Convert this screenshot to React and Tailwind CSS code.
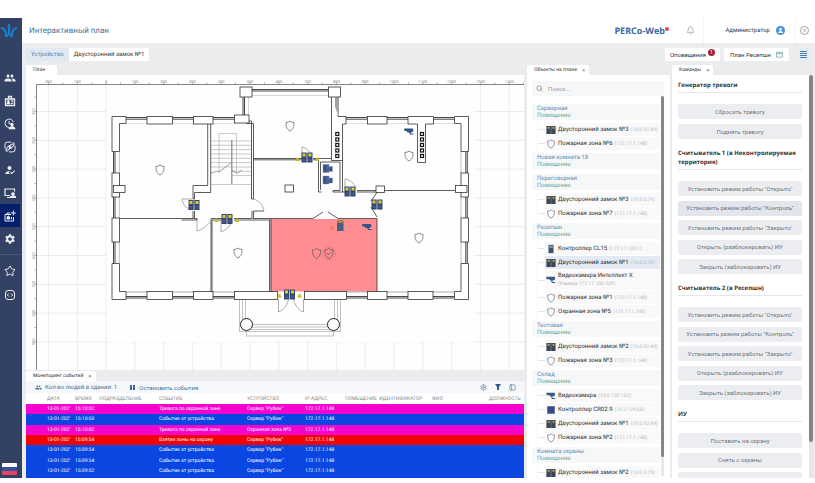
import React, { useState } from "react";
import { MdPeople, MdSettings, MdHowToReg } from "react-icons/md";
import { LuBell, LuSearch, LuStar, LuSettings, LuPanelLeft } from "react-icons/lu";

const groups = [
  {
    name: "Серверная",
    items: [
      { icon: "lock", name: "Двусторонний замок №3", ip: "(10.0.92.49)" },
      { icon: "shield", name: "Пожарная зона №6", ip: "(172.17.1.148)" },
    ],
  },
  { name: "Новая комната 18", items: [] },
  {
    name: "Переговорная",
    items: [
      { icon: "lock", name: "Двусторонний замок №3", ip: "(10.0.0.29)" },
      { icon: "shield", name: "Пожарная зона №7", ip: "(172.17.1.148)" },
    ],
  },
  {
    name: "Ресепшн",
    items: [
      { icon: "reader", name: "Контроллер CL15", ip: "(172.17.100.1)" },
      { icon: "lock", name: "Двусторонний замок №1", ip: "(10.0.0.29)", selected: true },
      { icon: "camera", name: "Видеокамера Интеллект X", ip: "(Камера 172.17.100.539)", tall: true },
      { icon: "shield", name: "Пожарная зона №1", ip: "(172.17.1.148)" },
      { icon: "shield", name: "Охранная зона №5", ip: "(172.17.1.148)" },
    ],
  },
  {
    name: "Тестовая",
    items: [
      { icon: "lock", name: "Двусторонний замок №2", ip: "(10.0.92.49)" },
      { icon: "shield", name: "Пожарная зона №3", ip: "(172.17.1.148)" },
    ],
  },
  {
    name: "Склад",
    items: [
      { icon: "camera", name: "Видеокамера", ip: "(10.0.100.132)" },
      { icon: "chip", name: "Контроллер CR02.9", ip: "(10.2.129.66)" },
      { icon: "lock", name: "Двусторонний замок №1", ip: "(10.0.92.49)" },
      { icon: "shield", name: "Пожарная зона №2", ip: "(172.17.1.148)" },
    ],
  },
  {
    name: "Комната охраны",
    items: [{ icon: "lock", name: "Двусторонний замок №2", ip: "(10.0.9.29)" }],
  },
];

const readerCommands = [
  'Установить режим работы "Открыто"',
  'Установить режим работы "Контроль"',
  'Установить режим работы "Закрыто"',
  "Открыть (разблокировать) ИУ",
  "Закрыть (заблокировать) ИУ",
];

const commands = [
  { title: "Генератор тревоги", height: "h-[35px]", buttons: ["Сбросить тревогу", "Поднять тревогу"] },
  { title: "Считыватель 1 (в Неконтролируемая территория)", height: "h-[93px]", buttons: readerCommands, active: 1 },
  { title: "Считыватель 2 (в Ресепшн)", height: "h-[93px]", buttons: readerCommands },
  { title: "ИУ", height: "h-[54px]", buttons: ["Поставить на охрану", "Снять с охраны", "Снять тревогу"] },
];

const columns = [
  ["", "w-[21px]"],
  ["ДАТА", "w-[28px]"],
  ["ВРЕМЯ", "w-[24px]"],
  ["ПОДРАЗДЕЛЕНИЕ", "w-[60px]"],
  ["СОБЫТИЕ", "w-[88px]"],
  ["УСТРОЙСТВО", "w-[58px]"],
  ["IP-АДРЕС", "w-[40px]"],
  ["ПОМЕЩЕНИЕ", "w-[34px]"],
  ["ИДЕНТИФИКАТОР", "w-[53px]"],
  ["ФИО", "w-[57px]"],
  ["ДОЛЖНОСТЬ", "w-[35px]"],
];

const events = [
  { time: "15:10:02", text: "Тревога по охранной зоне", device: 'Сервер "Рубеж"', color: "bg-[#f403cf]" },
  { time: "15:10:03", text: "Событие от устройства", device: 'Сервер "Рубеж"', color: "bg-[#0a47e2]" },
  { time: "15:10:02", text: "Тревога по охранной зоне", device: "Охранная зона №5", color: "bg-[#f403cf]" },
  { time: "15:09:54", text: "Взятие зоны на охрану", device: 'Сервер "Рубеж"', color: "bg-[#f00505]" },
  { time: "15:09:54", text: "Событие от устройства", device: 'Сервер "Рубеж"', color: "bg-[#0a47e2]" },
  { time: "15:09:54", text: "Событие от устройства", device: 'Сервер "Рубеж"', color: "bg-[#0a47e2]" },
  { time: "15:09:52", text: "Событие от устройства", device: 'Сервер "Рубеж"', color: "bg-[#0a47e2]" },
];

const shieldPath = "M0 -5 C1.5 -3.8 2.5 -3.6 4 -3.6 C4.2 0.5 3.4 3 0 5 C-3.4 3 -4.2 0.5 -4 -3.6 C-2.5 -3.6 -1.5 -3.8 0 -5Z";

const BadgeIcon = () => (
  <svg viewBox="0 0 12 12" className="size-3" fill="none" stroke="currentColor" strokeWidth="1.3">
    <path d="M1.5 4h9v6.5h-9zM4.5 4V1.5h3V4" />
    <path d="M3 8.7c0-1.4 2.8-1.4 2.8 0zM7.2 6h2M7.2 8.3h2" />
    <circle cx="4.4" cy="6.3" r=".6" fill="currentColor" />
  </svg>
);

const ClockUserIcon = () => (
  <svg viewBox="0 0 12 12" className="size-3" fill="none" stroke="currentColor" strokeWidth="1">
    <path d="M5 9.5A4.2 4.2 0 1 1 9.2 4.2M5 3v2.7h1.6" />
    <circle cx="8" cy="6.6" r="1.3" fill="currentColor" />
    <path d="M5 10.8c0-2.6 6-2.6 6 0z" fill="currentColor" />
  </svg>
);

const LinkIcon = () => (
  <svg viewBox="0 0 12 12" className="size-3" fill="none" stroke="currentColor" strokeWidth="1">
    <path d="M7 1.1H3.2A2.2 2.2 0 0 0 1 3.3v4.2M5 10.9h3.8A2.2 2.2 0 0 0 11 8.7V4.5M8.5 1.5a2.2 2.2 0 0 1 2 2M1.5 8.5a2.2 2.2 0 0 0 2 2" />
    <rect x="2.2" y="5.5" width="5" height="2.6" rx="1.3" transform="rotate(-45 4.7 6.8)" />
    <rect x="4.8" y="3.9" width="5" height="2.6" rx="1.3" transform="rotate(-45 7.3 5.2)" />
  </svg>
);

const ScreenUserIcon = () => (
  <svg viewBox="0 0 12 12" className="size-3" fill="none" stroke="currentColor" strokeWidth="1.2">
    <path d="M6 8.5H1V2h9.5v2.5M3 10.5h3" />
    <circle cx="9" cy="7" r="1.2" fill="currentColor" />
    <path d="M6.5 10.5c0-2 5-2 5 0z" fill="currentColor" />
  </svg>
);

const PlanIcon = () => (
  <svg viewBox="0 0 12 12" className="size-3" fill="none" stroke="currentColor" strokeWidth="1">
    <path d="M7 4.5H1V11h8.5V7M3 4.5V3h3" />
    <path d="M3 9V7l1.3-1 1.3 1v2zM7.5 7v2.3" fill="currentColor" />
    <path d="M9.3 .5v5M6.8 3h5" />
  </svg>
);

const CodeIcon = () => (
  <svg viewBox="0 0 12 12" className="size-3" fill="none" stroke="currentColor" strokeWidth="1">
    <rect x="1.5" y="1.5" width="9" height="9" rx="2.5" />
    <path d="M4.8 4.5L3.3 6l1.5 1.5M7.2 4.5L8.7 6 7.2 7.5" />
  </svg>
);

const menu = [
  { label: "Персонал", icon: <MdPeople className="size-3" /> },
  { label: "Бюро пропусков", icon: <BadgeIcon /> },
  { label: "УРВ", icon: <ClockUserIcon /> },
  { label: "Интеграции", icon: <LinkIcon /> },
  { label: "Верификация", icon: <MdHowToReg className="size-3" /> },
  { label: "Мониторинг", icon: <ScreenUserIcon /> },
  { label: "Интерактивный план", icon: <PlanIcon />, active: true },
  { label: "Администрирование", icon: <MdSettings className="size-3" /> },
];

const Sidebar = () => (
  <nav className="flex w-[22px] shrink-0 flex-col bg-[#334164] text-white/90">
    <svg viewBox="0 0 18 18" className="mt-1 mb-[26px] size-[18px] shrink-0" fill="none" stroke="#1581cf" strokeWidth="2.2">
      <path d="M9 2v11M1 6c4 .5 5 3 5.5 9M17 6c-4 .5-5 3-5.5 9" />
      <path d="M6 15l3-3 3 3" strokeWidth="1.5" />
    </svg>
    {menu.map((item) => (
      <button
        key={item.label}
        aria-label={item.label}
        className={`flex h-[23px] w-5 shrink-0 items-center justify-center ${item.active ? "bg-[#04206b]" : ""}`}
      >
        {item.icon}
      </button>
    ))}
    <div className="my-1 h-px bg-white/10" />
    <button aria-label="Избранное" className="flex h-6 w-5 items-center justify-center">
      <LuStar className="size-3" />
    </button>
    <button aria-label="API" className="flex h-6 w-5 items-center justify-center">
      <CodeIcon />
    </button>
    <button aria-label="Русский" className="mt-auto mb-[3px] ml-[2px] flex h-3 w-[15px] flex-col overflow-hidden rounded-[1px]">
      <span className="h-1 w-full bg-white" />
      <span className="h-1 w-full bg-[#34509c]" />
      <span className="h-1 w-full bg-[#e3455a]" />
    </button>
  </nav>
);

const Header = () => (
  <header className="flex h-[25px] shrink-0 items-center bg-white">
    <h1 className="ml-[7px] text-[8px] text-[#4a7096]">Интерактивный план</h1>
    <div className="ml-auto flex items-start">
      <span className="font-['Open_Sans',sans-serif] text-[9px] leading-3 font-bold text-[#3a689f]">PERCo-Web</span>
      <span className="mt-[2px] size-1 rounded-full bg-[#e04545]" />
    </div>
    <button aria-label="Уведомления" className="mr-2 ml-[17px] text-gray-400">
      <LuBell className="size-[9px]" />
    </button>
    <div className="flex h-full w-[93px] items-center justify-end gap-[6px] border-x border-gray-100 pr-[10px]">
      <span className="text-[6px] text-[#333]">Администратор</span>
      <svg viewBox="0 0 10 10" className="size-[9px]">
        <circle cx="5" cy="5" r="5" fill="#4593dc" />
        <circle cx="5" cy="3.7" r="1.5" fill="#fff" />
        <path d="M2.3 7.8c0-3 5.4-3 5.4 0z" fill="#fff" />
      </svg>
    </div>
    <button aria-label="Помощь" className="mr-[6px] ml-1 flex size-[9px] items-center justify-center rounded-full border border-gray-400 text-[6px] leading-none text-gray-500">
      ?
    </button>
  </header>
);

const Toolbar = () => (
  <div className="flex h-[22px] shrink-0 items-center text-[6px] text-[#333]">
    <a href="#device" className="ml-1 flex h-[13px] items-center bg-[#e0e8f1] px-[5px] text-[#5a83ad]">
      Устройство
    </a>
    <a href="#lock" className="flex h-[13px] items-center rounded-[1px] bg-white px-[5px]">
      Двусторонний замок №1
    </a>
    <button className="ml-auto flex h-[13px] w-[55px] justify-center gap-[2px] rounded-[1px] bg-white">
      <span className="self-center">Оповещения</span>
      <span className="mt-px flex size-[7px] items-center justify-center rounded-full bg-[#a81e35] text-[5px] leading-none text-white">1</span>
    </button>
    <button className="ml-1 flex h-[13px] w-[65px] items-center justify-between rounded-[1px] bg-white px-[6px]">
      План Ресепшн
      <svg viewBox="0 0 8 8" className="size-[7px]" fill="none" stroke="#6a9aa0" strokeWidth=".8">
        <path d="M.5 1.5h7v5.5h-7zM.5 3.2h7M4 1.5v1.7" />
      </svg>
    </button>
    <button aria-label="Меню" className="mr-2 ml-[11px] flex w-[7px] flex-col gap-px">
      <span className="h-px w-full bg-[#3f7fc0]" />
      <span className="h-px w-full bg-[#3f7fc0]" />
      <span className="h-px w-full bg-[#3f7fc0]" />
      <span className="h-px w-full bg-[#3f7fc0]" />
    </button>
  </div>
);

const Tab = ({ children, closable = true }) => (
  <div className={`flex h-[10px] shrink-0 items-center self-start rounded-t-[2px] bg-white pl-[7px] text-[5px] leading-none text-[#333] ${closable ? "pr-1" : "pr-3"}`}>
    {children}
    {closable && (
      <button aria-label="Закрыть" className="ml-[5px] text-[6px] leading-none text-gray-500">
        ×
      </button>
    )}
  </div>
);

const Shield = ({ x, y }) => <path d={shieldPath} transform={`translate(${x} ${y})`} fill="none" stroke="#555" strokeWidth=".7" />;

const Lock = ({ x, y }) => (
  <g transform={`translate(${x} ${y})`}>
    <rect x="-5.5" y="-5" width="5.2" height="10" fill="#34466f" />
    <rect x=".3" y="-5" width="5.2" height="10" fill="#34466f" />
    <rect x="-4.5" y="-4" width="3" height="3" fill="#d9cd34" />
    <rect x="1.5" y="-4" width="3" height="3" fill="#d9cd34" />
    <path d="M-4.5 1.5h3M1.5 1.5h3M-4.5 3h3M1.5 3h3" stroke="#5e76a5" strokeWidth=".6" />
  </g>
);

const Camera = ({ x, y }) => (
  <g transform={`translate(${x} ${y})`} fill="#34567f">
    <path d="M-5 -3.5h9l.5 2.5-2 1.5h-4l-1-1.5h-2z" />
    <path d="M0 0l1 2.5h3.5v-1H2L1.5 0z" />
  </g>
);

const Signal = ({ x, y, color = "#cdbb22" }) => (
  <g transform={`translate(${x} ${y})`} fill={color}>
    <rect x="-1.2" y="-1.8" width="2.4" height="3.2" />
    <rect x="-1.9" y=".2" width="3.8" height="1.2" />
  </g>
);

const ObjectIcon = ({ type }) => (
  <svg viewBox="-6 -6 12 12" className="size-[10px] shrink-0">
    {type === "lock" && (
      <g>
        <rect x="-5.5" y="-4.8" width="11" height="9.6" fill="#3b4658" />
        <path d="M0 -4.8v9.6" stroke="#9aa6b5" strokeWidth=".6" />
        <rect x="-4" y="-3.8" width="2.4" height="2.4" fill="#a8a64e" />
        <rect x="1.8" y="-3.8" width="2.4" height="2.4" fill="#a8a64e" />
      </g>
    )}
    {type === "shield" && <path d={shieldPath} fill="#fff" stroke="#6d7280" strokeWidth=".9" />}
    {type === "camera" && (
      <g fill="#3a5c85">
        <path d="M-5.5 -4h10l.5 3-2 1.5h-4l-1-1.5h-3.5z" />
        <path d="M0 .5l1 3h4v-1.2H2L1.5 .5z" />
      </g>
    )}
    {type === "chip" && <rect x="-4.5" y="-4.5" width="9" height="9" fill="#3b4d86" />}
    {type === "reader" && (
      <g>
        <rect x="-3" y="-5" width="6" height="10" fill="#40526b" />
        <rect x="-2" y="-4" width="4" height="2.5" fill="#8fa6b5" />
      </g>
    )}
  </svg>
);

// wall blocks of the floor: x, y, width, height
const walls = [
  [147, 116.5, 25.5, 7.5], [193.5, 116.5, 19.5, 7.5], [234.5, 115, 14.5, 8],
  [367.5, 116.5, 19.5, 7.5],
  [240, 87, 12, 10], [328.5, 87, 12, 10],
  [147, 291.5, 25.5, 8], [193.5, 291.5, 19.5, 8], [234.5, 291.5, 43, 8],
  [304.5, 291.5, 42, 8], [367.5, 291.5, 19.5, 8], [408, 291.5, 25, 8],
  [112, 173, 7.5, 24], [112, 218, 7.5, 24], [461, 173, 7.5, 24], [461, 218, 7.5, 24],
  [113.5, 185.5, 11.5, 7], [455.5, 185.5, 11.5, 7], [376, 186, 8.5, 6.5], [285, 185, 8.5, 7],
];

const topWindows = [[126, 147], [172.5, 193.5], [213, 234.5], [346, 367.5], [387, 408], [433.5, 454.5]];
const bottomWindows = [[126, 147], [172.5, 193.5], [213, 234.5], [346.5, 367.5], [387, 408], [433, 454.5]];
const sideWindows = [[151.5, 173], [197, 218], [242, 263.5]];

const FloorPlan = () => {
  const vLines = [48.5, 77.3, 106];
  for (let i = 1; i < 15; i++) vLines.push(106 + i * 28.8);
  const hLines = [];
  for (let i = 0; i < 9; i++) hLines.push(111.5 + i * 28.8);
  const labels = ["200", "100", "0", "100", "200", "300", "400", "500", "600", "700", "800", "900", "1000", "1100", "1200", "1300", "1400"];

  return (
    <svg viewBox="26 75 498 295" className="h-full w-full" preserveAspectRatio="xMinYMin meet">
      <rect x="36.5" y="84" width="487.5" height="286" fill="#fefefe" />
      <g stroke="#dcdde0" strokeWidth=".6">
        {vLines.map((x) => <path key={x} d={`M${x} 84V370`} />)}
        {hLines.map((y) => <path key={y} d={`M36.5 ${y}H524`} />)}
      </g>
      <rect x="106.5" y="84.5" width="368" height="257.5" fill="#fefefe" />

      {/* rulers */}
      <path d="M524 84.5H36.5V370" fill="none" stroke="#666" strokeWidth=".8" />
      <g stroke="#777" strokeWidth=".6">
        {vLines.map((x) => <path key={x} d={`M${x} 82.5V84.5M${x + 14.4} 82.5V84.5`} />)}
        {hLines.map((y) => <path key={y} d={`M34.5 ${y}H36.5M34.5 ${y - 14.4}H36.5`} />)}
      </g>
      <g fill="#888" fontSize="4" textAnchor="middle">
        {vLines.map((x, i) => <text key={x} x={x} y="82.5">{labels[i]}</text>)}
        {hLines.map((y, i) => <text key={y} transform={`translate(35 ${y}) rotate(-90)`}>{(i + 1) * 100}</text>)}
      </g>

      {/* alarmed room */}
      <rect x="270.5" y="219" width="106.5" height="72.5" fill="#ff8d92" />

      {/* porch */}
      <g fill="none" stroke="#999" strokeWidth=".6">
        <path d="M239.5 299.5V331.5H340.5V299.5M242.5 299.5V330M337.5 299.5V330M245.5 299.5V319M334.5 299.5V319" />
        <path d="M252 324.5H328M252 327H328M244 329.5H336M246.5 331V336H333.5V331" />
      </g>

      {/* stairs */}
      <g fill="none" stroke="#a5a5a5" strokeWidth=".6">
        <path d="M211 141h41M211 145.3h41M211 149.6h41M211 154h41M211 158.3h41M211 162.6h41M211 167h41M232 171.3h20M232 175.6h20M211 184.5h41" />
        <path d="M219 173V133.5h17.5V173" />
        <path d="M231.8 140v44" stroke="#888" strokeWidth="1.2" />
        <path d="M211 173l7-2 1 1 12-9M232 170l5 3.5 5-3.5" stroke="#666" />
      </g>

      {/* windows */}
      <g stroke="#333" strokeWidth=".6">
        {topWindows.map(([a, b]) => <path key={a} d={`M${a} 117.5H${b}M${a} 119.2H${b}`} strokeWidth=".9" />)}
        {topWindows.map(([a, b]) => <path key={a} d={`M${a} 123.5H${b}`} stroke="#ccc" />)}
        {bottomWindows.map(([a, b]) => <path key={a} d={`M${a} 296.5H${b}M${a} 298H${b}`} strokeWidth=".9" />)}
        {bottomWindows.map(([a, b]) => <path key={a} d={`M${a} 292H${b}`} stroke="#777" />)}
        {sideWindows.map(([a, b]) => (
          <path key={a} d={`M113.5 ${a}V${b}M115 ${a}V${b}M465.8 ${a}V${b}M467.3 ${a}V${b}`} strokeWidth=".9" />
        ))}
        {sideWindows.map(([a, b]) => <path key={a} d={`M119.3 ${a}V${b}M461 ${a}V${b}`} stroke="#999" />)}
        <path d="M252 89.5h76.5M252 91h76.5M243 97v18M244.5 97v18M336 97v18M338 97v18" strokeWidth=".9" />
        <path d="M252 95.5h76.5M248.5 97v18" stroke="#bbb" />
      </g>

      {/* walls */}
      <g fill="#fff" stroke="#333" strokeWidth=".8">
        <path d="M126 116.5H112V151.5H119.5V123.5H126Z" />
        <path d="M454.5 116.5H468.5V151.5H461V123.5H454.5Z" />
        <path d="M112 263.5V299.5H126V291.5H119.5V263.5Z" />
        <path d="M468.5 263.5V299.5H454.5V291.5H461V263.5Z" />
        <path d="M408 116.5H433.5V124H425.5V162.5H417.5V124H408Z" />
        <path d="M331.5 97V160.5H342.5V124H346V116.5H338V115" />
        {walls.map(([x, y, w, h]) => <rect key={`${x}-${y}`} x={x} y={y} width={w} height={h} />)}
      </g>
      <g fill="none" stroke="#333" strokeWidth=".8">
        <path d="M207.7 124V185.5H193V199M210.7 124V192.5H194.5V199H193M193 211V218M194.5 211V218" />
        <path d="M119.5 218.5H197V220H181.5M211 292V218.5H223M212 291V220H223M234 218.5H252M234 220H270M252 218.5V211M253.5 218.5V211H264" />
        <path d="M249 121H251.5V199M246 123.5H253.5V199H251.5" />
        <path d="M253.5 158.5H302M253.5 159.8H302M313 158.5H331M313 159.8H318.5V192H321.5M320.5 162H340V190.5H333V192H346M320.5 162V190M342.5 160V192M357 190.5H376M357 192H376M384.5 190.5H455.5" />
        <path d="M253 218.5H313M338 218.5H377V291.5M313 218.5L323 212M328 212L338 218.5M377 192.5L371 201M371 207L377 217" />
        <path d="M269.5 220V291.5M271 219V291.5" />
      </g>
      <path d="M197 219v12c5-1 10-5 13-9M182 199h10M182 199c1 6 4 9 9 11M253 199c5 1 10 5 11 12M221 220v12c5-2 9-5 11-11M302 158v-11c4 1 8 4 10 9M345 190v-11c5 1 9 4 11 9M278.5 299v13c5-2 8-6 10-12M303.5 299v13c-5-2-8-6-10-12" fill="none" stroke="#777" strokeWidth=".6" />
      {[134, 139.5, 145, 150.5, 156].map((y) => (
        <g key={y} fill="#fff" stroke="#111" strokeWidth="1.2">
          <rect x="335.8" y={y - 1.5} width="3" height="3" />
          <rect x="420.5" y={y - 1.5} width="3" height="3" />
        </g>
      ))}
      <g fill="#fff" stroke="#222">
        <circle cx="246.5" cy="324.5" r="6" />
        <circle cx="333.5" cy="324.5" r="6" />
      </g>

      {/* devices */}
      <Shield x={160} y={170} />
      <Shield x={238} y={253} />
      <Shield x={290} y={126} />
      <Shield x={409} y={156} />
      <Shield x={419} y={238} />
      <Shield x={316.5} y={253.5} />
      <Shield x={329} y={253.5} />
      <path d="M327 253l1.5 1.8 3-3.3" fill="none" stroke="#555" strokeWidth=".7" />
      <circle cx="329" cy="253.5" r="6.3" fill="none" stroke="#a5555c" strokeWidth=".6" strokeDasharray="1.5 1.2" />
      <Lock x={194} y={205} />
      <Lock x={227} y={219} />
      <Lock x={307} y={157.5} />
      <Lock x={350} y={191.5} />
      <Lock x={377} y={204.5} />
      <Lock x={289.5} y={294.5} />
      <Signal x={216.5} y={220.5} />
      <Signal x={237} y={220.5} />
      <Signal x={297.5} y={159.5} />
      <Signal x={317.5} y={159.5} />
      <Signal x={279.5} y={296} />
      <Signal x={299.5} y={296} />
      <Signal x={332} y={228} color="#f07f3c" />
      <Camera x={409} y={132} />
      <Camera x={367} y={227.5} />
      <rect x="337" y="220.5" width="6.5" height="10.5" fill="#44617d" />
      <rect x="337.5" y="220.5" width="5.5" height="2.5" fill="#a98a3a" />
      <path d="M323 164.5h6v8h-6zM327 166.5h5.5v5h-5.5zM323 176h6v8h-6zM327 178h5.5v5h-5.5z" fill="#3c5587" stroke="#7d90b5" strokeWidth=".4" />
    </svg>
  );
};

const EventMonitor = () => (
  <section className="flex h-[108px] shrink-0 flex-col pt-px">
    <Tab>Мониторинг событий</Tab>
    <div className="flex h-3 shrink-0 items-center bg-[#f5f7fa] pr-2 pl-[9px] text-[6px] text-[#4a7096]">
      <MdPeople className="mr-[3px] size-[7px]" />
      Кол-во людей в здании: 1
      <button className="ml-[13px] flex items-center gap-1">
        <svg viewBox="0 0 5 5" className="size-[5px]" fill="#3e6b97">
          <path d="M0 0h2v5H0zM3 0h2v5H3z" />
        </svg>
        Остановить события
      </button>
      <div className="ml-auto flex items-center gap-2">
        <button aria-label="Настройки">
          <LuSettings className="size-[7px]" />
        </button>
        <button aria-label="Фильтр">
          <svg viewBox="0 0 6 6" className="size-[6px]" fill="#2f5e90">
            <path d="M0 0h6L4 3v3H2V3z" />
          </svg>
        </button>
        <button aria-label="Колонки">
          <LuPanelLeft className="size-[7px]" />
        </button>
      </div>
    </div>
    <div className="min-h-0 flex-1 overflow-hidden bg-[#0a47e2]">
      <table className="h-[83px] w-full table-fixed border-collapse text-left text-[5px] leading-[8px]">
        <thead>
          <tr className="h-[11px] bg-white text-[#888]">
            {columns.map(([title, width]) => (
              <th key={title} className={`overflow-visible p-0 font-normal whitespace-nowrap ${width}`}>
                {title}
              </th>
            ))}
          </tr>
        </thead>
        <tbody className="text-white">
          {events.map((event, i) => (
            <tr key={i} className={event.color}>
              <td className="p-0" />
              <td className="p-0 whitespace-nowrap">13-01-202'</td>
              <td className="p-0 whitespace-nowrap">{event.time}</td>
              <td className="p-0" />
              <td className="p-0 whitespace-nowrap">{event.text}</td>
              <td className="p-0 whitespace-nowrap">{event.device}</td>
              <td className="p-0 whitespace-nowrap">172.17.1.148</td>
              <td colSpan={4} className="p-0" />
            </tr>
          ))}
        </tbody>
      </table>
    </div>
  </section>
);

const ObjectsPanel = () => {
  const [query, setQuery] = useState("");

  return (
    <section className="flex w-[143px] shrink-0 flex-col">
      <Tab>Объекты на плане</Tab>
      <div className="flex min-h-0 flex-1 flex-col bg-white pt-[6px] pr-[6px] pl-[5px]">
        <label className="flex h-[15px] shrink-0 items-center gap-[5px] bg-[#f6f7f8] px-1 text-gray-500">
          <LuSearch className="size-[7px]" />
          <input
            aria-label="Поиск"
            value={query}
            onChange={(e) => setQuery(e.target.value)}
            placeholder="Поиск..."
            className="min-w-0 flex-1 text-[6px] outline-none placeholder:text-gray-400"
          />
        </label>
        <div className="flex min-h-0 flex-1">
          <div className="min-w-0 flex-1 overflow-hidden pt-2">
            {groups.map((group) => (
              <div key={group.name} className="pb-[2px]">
                <div className="mb-[3px] flex h-4 flex-col justify-center bg-[#f6f7f8] pl-[5px] text-[6px] leading-[7px]">
                  <span className="text-[#5f8bb0]">{group.name}</span>
                  <span className="text-[#69a79c]">Помещение</span>
                </div>
                <ul className="ml-[5px] text-[6px] leading-[8px]">
                  {group.items.map((item, i) => (
                    <li key={i} className={`flex border-l border-gray-100 pb-px ${item.tall ? "h-[21px]" : "h-[14px]"}`}>
                      <span className="w-[7px] shrink-0 self-center border-t border-gray-200" />
                      <div className={`flex min-w-0 flex-1 items-center gap-[2px] overflow-hidden pl-px whitespace-nowrap ${item.selected ? "bg-[#e3eaf3]" : "bg-[#f9f9fa]"}`}>
                        <ObjectIcon type={item.icon} />
                        <div className={item.tall ? "flex flex-col" : "flex gap-[2px]"}>
                          <span className="text-[#2e2e2e]">{item.name}</span>
                          <span className="text-[5px] text-[#b5b8bc]">{item.ip}</span>
                        </div>
                      </div>
                    </li>
                  ))}
                </ul>
              </div>
            ))}
          </div>
          <div className="mb-[2px] ml-px w-[3px] bg-gray-200">
            <div className="h-[95%] rounded-full bg-[#858585]" />
          </div>
        </div>
      </div>
    </section>
  );
};

const CommandsPanel = () => (
  <section className="flex w-[141px] shrink-0 flex-col">
    <Tab>Команды</Tab>
    <div className="flex min-h-0 flex-1 bg-white">
      <div className="min-w-0 flex-1 overflow-hidden pt-[6px] pr-[7px] pl-[6px]">
        {commands.map((section) => (
          <div key={section.title} className="mb-[10px]">
            <h2 className="mb-[11px] border-b border-gray-200 pb-[2px] font-['Open_Sans',sans-serif] text-[6px] leading-[9px] font-bold text-[#333]">
              {section.title}
            </h2>
            <div className={`flex flex-col justify-between ${section.height}`}>
              {section.buttons.map((title, i) => (
                <button
                  key={title}
                  className={`h-[15px] rounded-[2px] text-[6px] leading-none text-[#6f7780] ${section.active === i ? "bg-[#e3e5ec]" : "bg-[#ebedf0]"}`}
                >
                  {title}
                </button>
              ))}
            </div>
          </div>
        ))}
      </div>
      <div className="w-1 bg-gray-200">
        <div className="h-[91%] rounded-full bg-[#858585]" />
      </div>
    </div>
  </section>
);

const App = () => {
  return (
    <div className="flex h-screen overflow-hidden bg-white pt-[18px] pb-[5px] font-['Roboto',sans-serif] [text-rendering:geometricPrecision]">
      <Sidebar />
      <div className="flex min-w-0 flex-1 flex-col bg-[#eaecee]">
        <Header />
        <Toolbar />
        <main className="flex min-h-0 flex-1 pr-[2px] pl-1">
          <div className="mr-[3px] flex min-w-0 flex-1 flex-col">
            <Tab closable={false}>План</Tab>
            <div className="min-h-0 flex-1 bg-white">
              <FloorPlan />
            </div>
            <EventMonitor />
          </div>
          <ObjectsPanel />
          <div className="w-[2px] shrink-0" />
          <CommandsPanel />
        </main>
      </div>
    </div>
  );
};

export default App;
